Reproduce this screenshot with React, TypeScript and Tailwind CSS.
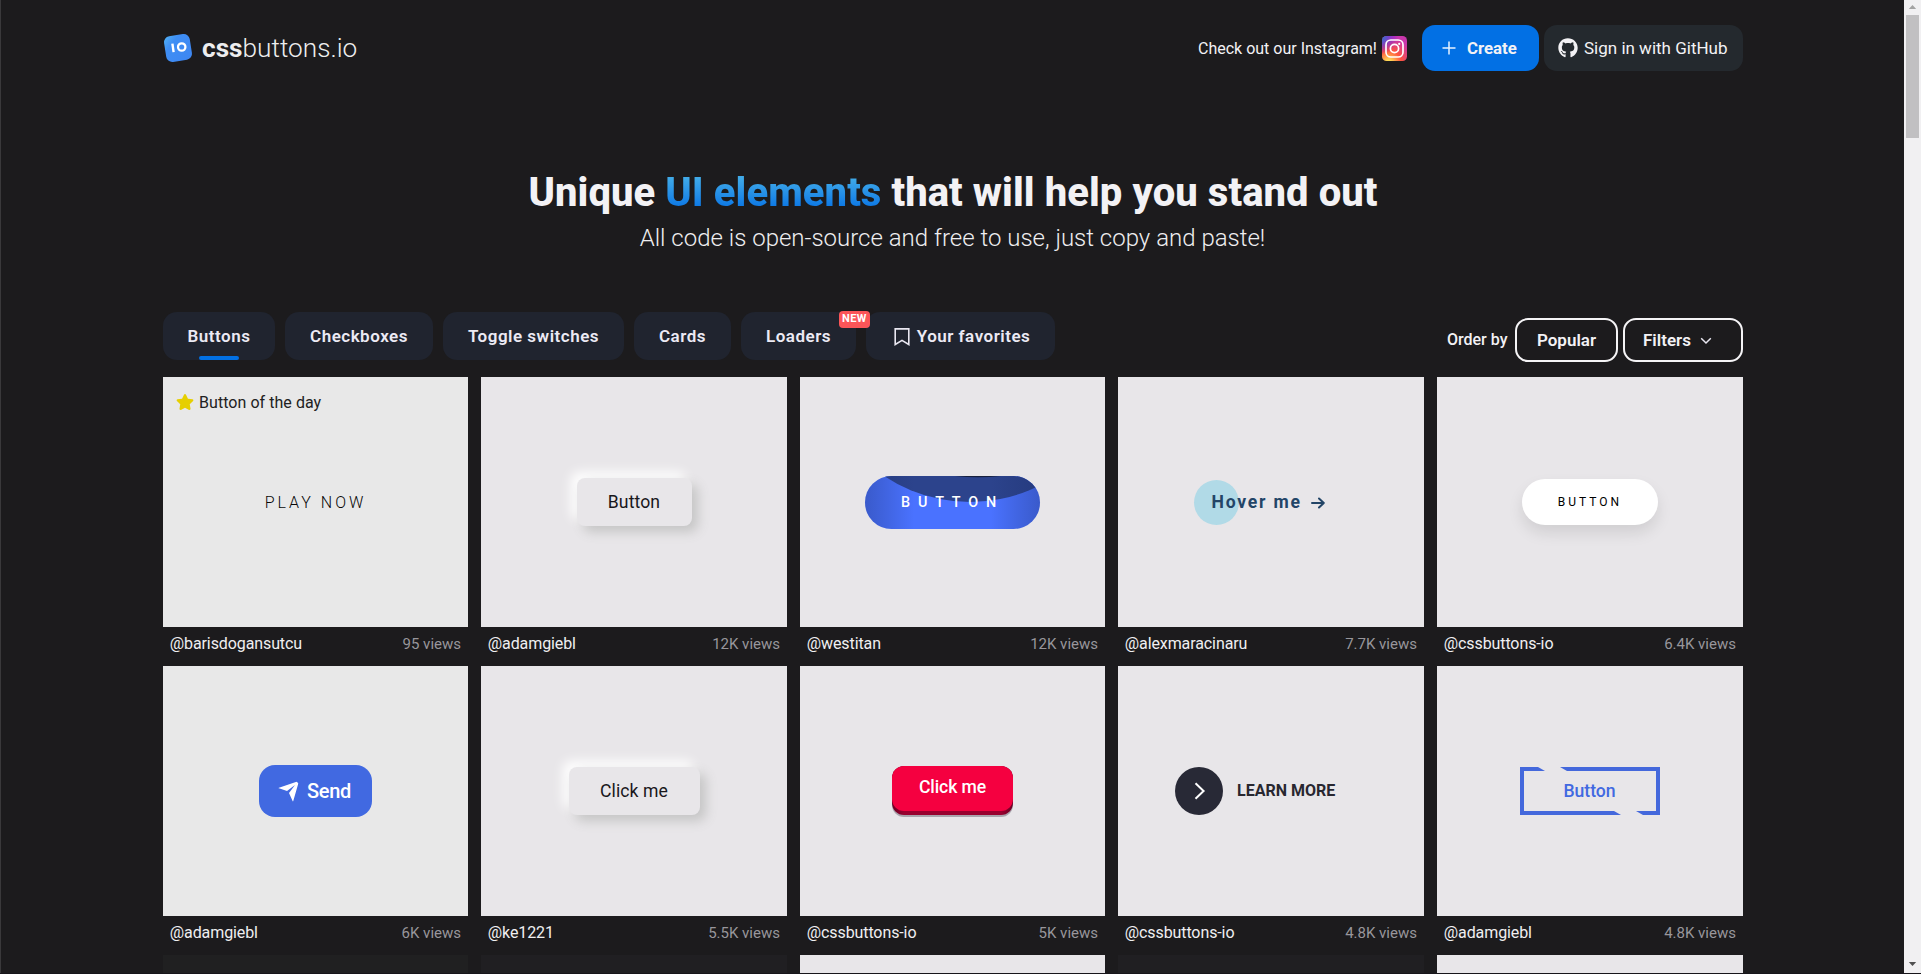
import type { ReactNode } from "react";
import { FaGithub, FaStar } from "react-icons/fa";

function Logo() {
  return (
    <svg width="30" height="30" viewBox="0 0 30 30" className="shrink-0">
      <defs>
        <linearGradient id="logo" x1="0" y1="0" x2="1" y2="1">
          <stop offset="0" stopColor="#52b4f6" />
          <stop offset="0.3" stopColor="#3e8ef4" />
          <stop offset="1" stopColor="#3e86f2" />
        </linearGradient>
      </defs>
      <rect x="2" y="2" width="26" height="26" rx="6" fill="url(#logo)" transform="rotate(-9 15 15)" />
      <path d="M9.4 10.6l1.2 8.6" stroke="#fff" strokeWidth="2.4" />
      <circle cx="18.7" cy="14" r="3.7" fill="none" stroke="#fff" strokeWidth="2.3" />
    </svg>
  );
}

function Instagram() {
  return (
    <svg width="25" height="25" viewBox="0 0 25 25" className="shrink-0">
      <defs>
        <radialGradient id="igWarm" cx="0.27" cy="1.08" r="1">
          <stop offset="0" stopColor="#ffdd55" />
          <stop offset="0.12" stopColor="#ffd854" />
          <stop offset="0.5" stopColor="#ff543e" />
          <stop offset="1" stopColor="#c837ab" />
        </radialGradient>
        <radialGradient id="igCool" cx="-0.1" cy="0" r="0.75">
          <stop offset="0" stopColor="#3771c8" />
          <stop offset="0.2" stopColor="#3771c8" />
          <stop offset="1" stopColor="#6600ff" stopOpacity="0" />
        </radialGradient>
      </defs>
      <rect width="25" height="25" rx="4.5" fill="url(#igWarm)" />
      <rect width="25" height="25" rx="4.5" fill="url(#igCool)" />
      <rect x="4" y="4" width="17" height="17" rx="4.8" fill="none" stroke="#fff" strokeWidth="1.7" />
      <circle cx="12.5" cy="12.5" r="4.1" fill="none" stroke="#fff" strokeWidth="1.7" />
      <circle cx="17.2" cy="7.9" r="1.1" fill="#fff" />
    </svg>
  );
}

function Header() {
  return (
    <header className="flex h-[46px] shrink-0 items-center justify-between">
      <div className="flex items-center">
        <Logo />
        <span className="ml-[9px] text-[26.2px] leading-8 font-light text-[#ededee]">
          <b className="font-bold">css</b>buttons.io
        </span>
      </div>
      <div className="flex h-[46px] items-center text-[#f3f2f5]">
        <span className="w-[184px] pt-px text-[16px] whitespace-nowrap">Check out our Instagram!</span>
        <Instagram />
        <button className="ml-[15px] flex h-[46px] w-[117px] items-center rounded-[13px] bg-[#0270e4] pl-[20px] text-[16.8px] font-bold">
          <svg width="14" height="14" viewBox="0 0 14 14" className="mr-[11px]" stroke="#e8f2ff" strokeWidth="1.5">
            <path d="M7 .5v13M.5 7h13" />
          </svg>
          <span className="pt-px">Create</span>
        </button>
        <button className="ml-[5px] flex h-[46px] w-[199px] items-center rounded-[13px] bg-[#24292e] pl-[14px] text-[17px] whitespace-nowrap">
          <FaGithub size={20} className="mr-[6px] shrink-0" />
          <span className="pt-px">Sign in with GitHub</span>
        </button>
      </div>
    </header>
  );
}

const tab =
  "relative flex h-12 items-center justify-center rounded-[14px] bg-[#20242f] pt-px text-[17px] font-semibold tracking-[0.5px] whitespace-nowrap text-[#eceaf4]";

function Toolbar() {
  return (
    <div className="flex h-[65px] shrink-0 justify-between">
      <nav className="flex gap-[10px]">
        <div className={`${tab} w-[112px]`}>
          Buttons
          <span className="absolute bottom-0 left-[36px] h-1 w-10 rounded-sm bg-[#0270e4]" />
        </div>
        <div className={`${tab} w-[148px]`}>Checkboxes</div>
        <div className={`${tab} w-[181px]`}>Toggle switches</div>
        <div className={`${tab} w-[97px]`}>Cards</div>
        <div className={`${tab} w-[115px]`}>
          Loaders
          <span className="absolute top-[-1px] right-[-14px] z-10 flex h-[17px] w-[31px] items-center justify-center rounded-[4px] bg-[#fb5558] text-[11px] font-bold tracking-[0.4px] text-white">
            NEW
          </span>
        </div>
        <div className={`${tab} w-[189px] pl-[3px]`}>
          <svg width="16" height="18" viewBox="0 0 16 18" className="mr-[7px]" fill="none" stroke="#e9e7f1" strokeWidth="1.6">
            <path d="M1.2.9h13.6v15.6L8 12.4l-6.8 4.1z" />
          </svg>
          Your favorites
        </div>
      </nav>
      <div className="mt-[6px] flex h-11 items-center text-[#f3f2f5]">
        <span className="w-[68px] text-[16px] font-medium whitespace-nowrap">Order by</span>
        <button className="flex h-11 w-[103px] items-center justify-center rounded-[13px] border-2 border-[#f5f4f6] pt-px text-[17px] font-semibold">
          Popular
        </button>
        <button className="ml-[5px] flex h-11 w-[120px] items-center rounded-[13px] border-2 border-[#f5f4f6] pt-px pl-[18px] text-[17px] font-semibold">
          Filters
          <svg width="12" height="8" viewBox="0 0 12 8" className="ml-[9px]" fill="none" stroke="#e9e7f1" strokeWidth="1.5">
            <path d="M1.2 1.2L6 6l4.8-4.8" />
          </svg>
        </button>
      </div>
    </div>
  );
}

function PlayNow() {
  return <span className="pt-[2px] text-[16px] font-light tracking-[3px] text-[#080808]">PLAY NOW</span>;
}

function Soft({ label, className }: { label: string; className: string }) {
  return (
    <button
      className={`flex h-12 items-center justify-center rounded-lg bg-[#e8e6e9] text-[17.6px] tracking-[0.1px] text-[#19171b] shadow-[6px_6px_12px_#c5c5c5,-6px_-6px_12px_#ffffff] ${className}`}
    >
      {label}
    </button>
  );
}

function Ripple() {
  return (
    <button className="relative flex h-[53px] w-[175px] items-center justify-center overflow-hidden rounded-[27px] bg-[#4a72ff]">
      <svg width="175" height="53" viewBox="0 0 175 53" className="absolute inset-0">
        <defs>
          <linearGradient id="sides">
            <stop offset="0" stopColor="#1a2c66" stopOpacity="0.34" />
            <stop offset="0.12" stopColor="#1a2c66" stopOpacity="0.2" />
            <stop offset="0.28" stopColor="#1a2c66" stopOpacity="0" />
            <stop offset="0.72" stopColor="#1a2c66" stopOpacity="0" />
            <stop offset="0.88" stopColor="#1a2c66" stopOpacity="0.2" />
            <stop offset="1" stopColor="#1a2c66" stopOpacity="0.34" />
          </linearGradient>
        </defs>
        <circle cx="105" cy="-129" r="155" fill="#2c438c" />
        <circle cx="113" cy="-199" r="200.3" fill="#17203f" />
        <rect width="175" height="53" fill="url(#sides)" />
      </svg>
      <span className="relative pt-px text-[14.4px] font-medium tracking-[7.8px] text-white">BUTTON</span>
    </button>
  );
}

function HoverMe() {
  return (
    <div className="relative flex h-[45px] w-[155px] items-center pl-[18px] text-[17.6px] font-bold tracking-[1.76px] text-[#234567]">
      <span className="absolute top-0 left-0 size-[45px] rounded-full bg-[#b1dae7]" />
      <span className="relative whitespace-nowrap">Hover me</span>
      <svg width="14" height="12" viewBox="0 0 14 12" className="relative mt-px ml-[9px] shrink-0" fill="none" stroke="#234567" strokeWidth="2" strokeLinecap="round" strokeLinejoin="round">
        <path d="M1 6h11.8M8 1.5L12.8 6 8 10.5" />
      </svg>
    </div>
  );
}

function WhitePill() {
  return (
    <button className="flex h-[46px] w-[136px] items-center justify-center rounded-[45px] bg-white text-[12px] tracking-[3px] text-black shadow-[0_8px_15px_rgba(0,0,0,0.1)]">
      BUTTON
    </button>
  );
}

function Send() {
  return (
    <button className="flex h-[52px] w-[113px] items-center rounded-2xl bg-[#4169e1] pl-[16px] text-[20px] text-white">
      <svg width="24" height="24" viewBox="0 0 24 24" className="mr-[8px] origin-center translate-x-[2px] rotate-45">
        <path
          fill="currentColor"
          d="M1.946 9.315c-.522-.174-.527-.455.01-.634l19.087-6.362c.529-.176.832.12.684.638l-5.454 19.086c-.15.529-.455.547-.679.045L12 14l6-8-8 6-8.054-2.685z"
          transform="rotate(-45 12 12)"
        />
      </svg>
      <span className="font-medium tracking-[-0.3px]">Send</span>
    </button>
  );
}

function RedPush() {
  return (
    <div className="h-[51px] w-[121px] rounded-[12px] bg-[#aaa4ad]">
      <div className="h-[49px] rounded-[12px] bg-[linear-gradient(to_left,#6b0024,#99002f_10%,#99002f_90%,#6b0024)]">
        <button className="flex h-[45px] w-full items-center justify-center rounded-[12px] bg-[#f50040] pb-px text-[17.6px] font-medium tracking-[-0.1px] text-white">
          Click me
        </button>
      </div>
    </div>
  );
}

function LearnMore() {
  return (
    <div className="flex w-[192px] items-center">
      <span className="flex size-12 shrink-0 items-center justify-center rounded-full bg-[#282936]">
        <svg width="12" height="18" viewBox="0 0 12 18" fill="none" stroke="#fff" strokeWidth="2" className="ml-[2px]">
          <path d="M1.5 1.2L9.6 9l-8.1 7.8" />
        </svg>
      </span>
      <span className="ml-[14px] text-[16px] font-bold whitespace-nowrap text-[#282730]">LEARN MORE</span>
    </div>
  );
}

function CutFrame() {
  return (
    <button className="relative flex h-12 w-[140px] items-center justify-center text-[17.6px] text-[#4169e1]">
      <svg width="140" height="48" viewBox="0 0 140 48" className="absolute inset-0" fill="#4468dc">
        <path d="M0 0h18l7 4H4v40h90l7 4H0z" />
        <path d="M140 48h-17l-7-4h20V4H47l-7-4h100z" />
      </svg>
      <span className="mr-px font-medium">Button</span>
    </button>
  );
}

type Card = { user: string; views: string; demo: ReactNode; green?: boolean; daily?: boolean };

const cards: Card[] = [
  { user: "@barisdogansutcu", views: "95 views", demo: <PlayNow />, green: true, daily: true },
  { user: "@adamgiebl", views: "12K views", demo: <Soft label="Button" className="w-[115px]" /> },
  { user: "@westitan", views: "12K views", demo: <Ripple /> },
  { user: "@alexmaracinaru", views: "7.7K views", demo: <HoverMe /> },
  { user: "@cssbuttons-io", views: "6.4K views", demo: <WhitePill /> },
  { user: "@adamgiebl", views: "6K views", demo: <Send />, green: true },
  { user: "@ke1221", views: "5.5K views", demo: <Soft label="Click me" className="w-[131px]" /> },
  { user: "@cssbuttons-io", views: "5K views", demo: <RedPush /> },
  { user: "@cssbuttons-io", views: "4.8K views", demo: <LearnMore /> },
  { user: "@adamgiebl", views: "4.8K views", demo: <CutFrame /> },
];

function CardView({ user, views, demo, green, daily }: Card) {
  return (
    <article className="flex h-[289px] flex-col">
      <div className={`relative flex h-[250px] items-center justify-center ${green ? "bg-[#e8e8e8]" : "bg-[#e8e6e9]"}`}>
        {daily && (
          <span className="absolute top-[14px] left-[13px] flex items-center text-[16px] leading-6 tracking-[0.05px] text-[#212121]">
            <FaStar size={18} className="mr-[5px] mb-[2px] text-[#e6cf00]" />
            Button of the day
          </span>
        )}
        {demo}
      </div>
      <div className="flex h-[33px] items-center justify-between pr-[7px] pl-[6.8px] text-[16px] text-[#f0eff1]">
        <span className="tracking-[-0.1px]">{user}</span>
        <span className="pt-px text-[15px] text-[#98969b]">{views}</span>
      </div>
    </article>
  );
}

export default function App() {
  return (
    <div className="flex h-[974px] w-[1921px] overflow-hidden border-b border-b-[#17151a] bg-[#1c1b1d] font-['Roboto','Liberation_Sans',sans-serif]">
      <div className="w-px shrink-0 bg-[#3a393b]" />
      <main className="flex h-[973px] w-[1903px] shrink-0 flex-col overflow-hidden pt-[25px] pr-[161px] pl-[162px]">
        <Header />
        <section className="flex h-[241px] shrink-0 flex-col items-center pt-[98px] text-center">
          <h1 className="text-[40px] leading-[48px] font-extrabold tracking-[0.06px] whitespace-nowrap text-[#f3f2f5]">
            Unique <span className="bg-linear-to-b from-[#3fa9e8] from-20% to-[#0270e4] to-90% bg-clip-text text-transparent">UI elements</span> that will help you stand out
          </h1>
          <p className="mr-px text-[24px] leading-[42px] font-light whitespace-nowrap text-[#efeef0]">
            All code is open-source and free to use, just copy and paste!
          </p>
        </section>
        <Toolbar />
        <div className="grid w-[1580px] shrink-0 grid-cols-[305px_306px_305px_306px_306px] gap-x-[13px]">
          {cards.map((card, i) => (
            <CardView key={i} {...card} />
          ))}
          <div className="h-[50px] bg-[#202021]" />
          <div className="h-[50px] bg-[#201f22]" />
          <div className="h-[50px] bg-[#e8e6e9]" />
          <div className="h-[50px] bg-[#201f22]" />
          <div className="h-[50px] bg-[#e8e6e9]" />
        </div>
      </main>
      <aside className="flex h-[973px] w-[17px] shrink-0 flex-col items-center bg-[#f1f0f2]">
        <svg width="17" height="15" viewBox="0 0 17 15">
          <path d="M4.8 9h7.4L8.5 5z" fill="#a3a3a3" />
        </svg>
        <div className="h-[123px] w-[13px] bg-[#c1c0c2]" />
        <svg width="17" height="17" viewBox="0 0 17 17" className="mt-auto">
          <path d="M4.8 6h7.4l-3.7 4z" fill="#505050" />
        </svg>
      </aside>
    </div>
  );
}
